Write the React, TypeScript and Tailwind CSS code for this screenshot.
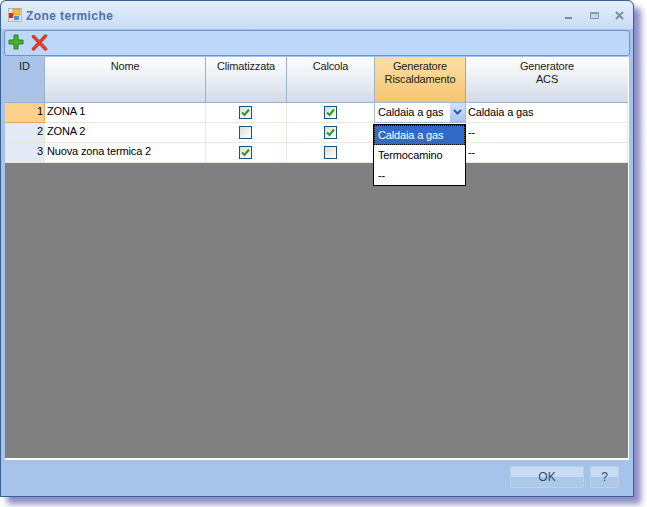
const F = "font-['Liberation_Sans',sans-serif]";

function Check({ on }: { on: boolean }) {
  return (
    <div className="flex h-[13px] w-[13px] items-center justify-center border border-[#1c5180] bg-gradient-to-br from-[#dcdcd7] to-white">
      {on && (
        <svg width="9" height="9" viewBox="0 0 9 9">
          <path d="M1 4.5 L3.5 7 L8 1.5" fill="none" stroke="#21a121" strokeWidth="2" />
        </svg>
      )}
    </div>
  );
}

function HeaderCell({ lines, selected, last }: { lines: string[]; selected?: boolean; last?: boolean }) {
  return (
    <div
      className={
        "flex flex-col items-center pt-[3px] text-[11px] leading-[13px] tracking-[-0.15px] border-b border-[#9ab3cc] " +
        (last ? "" : "border-r ") +
        (selected
          ? "bg-gradient-to-b from-[#fbe0a6] to-[#f6c46e] border-r-[#c2a26b] text-[#222]"
          : "bg-gradient-to-b from-white to-[#d4dbe8] border-r-[#9ab3cc] text-[#222]")
      }
    >
      {lines.map((l) => (
        <span key={l}>{l}</span>
      ))}
    </div>
  );
}

const cell = "flex items-center border-b border-r border-[#ece8d8] bg-white text-[11px] tracking-[-0.15px] text-black h-[20px]";

const rows = [
  { id: 1, nome: "ZONA 1", cl: true, ca: true, acs: "Caldaia a gas" },
  { id: 2, nome: "ZONA 2", cl: false, ca: true, acs: "--" },
  { id: 3, nome: "Nuova zona termica 2", cl: true, ca: false, acs: "--" },
];

export default function App() {
  return (
    <div className={"h-[507px] w-[647px] bg-white " + F}>
      <div className="relative flex h-[497px] w-[634px] flex-col rounded-t-[6px] border border-[#3b5f8f] bg-[#a6c4e9] shadow-[7px_7px_6px_#8c8cc6]">
        {/* title bar */}
        <div className="flex h-[28px] items-center rounded-t-[6px] bg-gradient-to-b from-[#e4effc] to-[#c8dcf5] pl-[7px] pr-[9px]">
          <svg width="14" height="14" viewBox="0 0 14 14">
            <rect x="0.5" y="0.5" width="13" height="13" fill="#e8e4dc" stroke="#b8b4ac" />
            <rect x="1" y="5" width="4" height="5" fill="#e02020" />
            <rect x="5" y="1" width="7" height="6" fill="#f4c030" stroke="#b08020" strokeWidth="0.5" />
            <rect x="6" y="8" width="5" height="4" fill="#4a90d8" />
          </svg>
          <span className="ml-[4px] mt-[1px] text-[12px] font-bold tracking-[0.4px] text-[#4f70a8]">Zone termiche</span>
          <div className="ml-auto flex items-center text-[#7d8ea4]">
            <div className="mt-[6px] h-[2px] w-[7px] bg-[#7d8ea4]" />
            <div className="ml-[18px] h-[7px] w-[9px] border border-[#8a9ab0] border-t-2 bg-[#c4d4ea]" />
            <svg className="ml-[16px]" width="9" height="9" viewBox="0 0 9 9">
              <path d="M1 1 L8 8 M8 1 L1 8" stroke="#7d8ea4" strokeWidth="2" />
            </svg>
          </div>
        </div>

        {/* toolbar */}
        <div className="mx-[3px] mt-[1px] flex h-[26px] items-center gap-[7px] rounded-[3px] border border-[#6d92c4] bg-[#bdd7fb] pb-[2px] pl-[3px]">
          <svg width="16" height="16" viewBox="0 0 16 16">
            <path d="M6 1h4v5h5v4h-5v5H6v-5H1V6h5z" fill="#45b52f" stroke="#2e7d23" />
          </svg>
          <svg width="17" height="17" viewBox="0 0 17 17">
            <path d="M2.5 2.5 L14.5 15 M14.5 2 L2.5 15" stroke="#e23a2c" strokeWidth="3.5" strokeLinecap="round" />
          </svg>
        </div>

        {/* grid */}
        <div className="relative mx-[4px] mt-[1px] flex h-[403px] flex-col border-b-2 border-r border-white bg-[#808080]">
          <div className="grid grid-cols-[40px_161px_81px_88px_91px_1fr]">
            <div className="flex h-[46px] justify-center border-b border-r border-[#9ab3cc] bg-[#a9c4e8] pt-[3px] text-[11px] leading-[13px] text-[#222]">
              ID
            </div>
            <HeaderCell lines={["Nome"]} />
            <HeaderCell lines={["Climatizzata"]} />
            <HeaderCell lines={["Calcola"]} />
            <HeaderCell lines={["Generatore", "Riscaldamento"]} selected />
            <HeaderCell lines={["Generatore", "ACS"]} last />
            {rows.map((r, i) => (
              <div key={r.id} className="contents">
                <div
                  className={
                    "flex h-[20px] items-center justify-end border-b border-r pb-[2px] pr-[1px] text-[11px] " +
                    (i === 0 ? "border-[#e0a860] bg-[#fdd08c]" : "border-[#ece8d8] bg-[#e3eaf6]")
                  }
                >
                  {r.id}
                </div>
                <div className={cell + " pb-[2px] pl-[2px]"}>{r.nome}</div>
                <div className={cell + " justify-center pr-[2px]"}>
                  <Check on={r.cl} />
                </div>
                <div className={cell + " justify-center"}>
                  <Check on={r.ca} />
                </div>
                <div className={cell} />
                <div className={cell + " pl-[2px]"}>{r.acs}</div>
              </div>
            ))}
          </div>

          {/* combo editor + dropdown */}
          <div className="absolute left-[369px] top-[45px] flex h-[21px] w-[92px] items-center border border-[#a3b8d0] bg-white pl-[3px] text-[11px] tracking-[-0.15px] text-black">
            Caldaia a gas
            <div className="absolute right-0 top-0 flex h-[19px] w-[15px] items-center justify-center bg-gradient-to-b from-[#d4e2f8] to-[#aac4ee]">
              <svg width="9" height="7" viewBox="0 0 9 7">
                <path d="M1 1 L4.5 4.5 L8 1" fill="none" stroke="#2f5a94" strokeWidth="2" />
              </svg>
            </div>
          </div>
          <div className="absolute left-[368px] top-[67px] flex h-[62px] w-[93px] flex-col border border-black bg-white text-[11px] tracking-[-0.15px] text-black">
            <div className="flex h-[20px] items-center border border-dotted border-black bg-[#316ac5] pl-[3px] text-white">Caldaia a gas</div>
            <div className="flex h-[20px] items-center pl-[4px]">Termocamino</div>
            <div className="flex h-[20px] items-center pl-[4px]">--</div>
          </div>
        </div>

        {/* footer */}
        <div className="flex flex-1 items-center justify-end gap-[6px] pb-[3px] pr-[14px]">
          <div className="flex h-[22px] w-[74px] items-center justify-center rounded-[2px] border border-[#bcd0ea] bg-[linear-gradient(#c8dcf4_50%,#aec8e8_50%)] text-[12px] text-[#2c4a78]">
            OK
          </div>
          <div className="flex h-[22px] w-[29px] items-center justify-center rounded-[2px] border border-[#bcd0ea] bg-[linear-gradient(#c8dcf4_50%,#aec8e8_50%)] text-[12px] text-[#2c4a78]">
            ?
          </div>
        </div>
      </div>
    </div>
  );
}
